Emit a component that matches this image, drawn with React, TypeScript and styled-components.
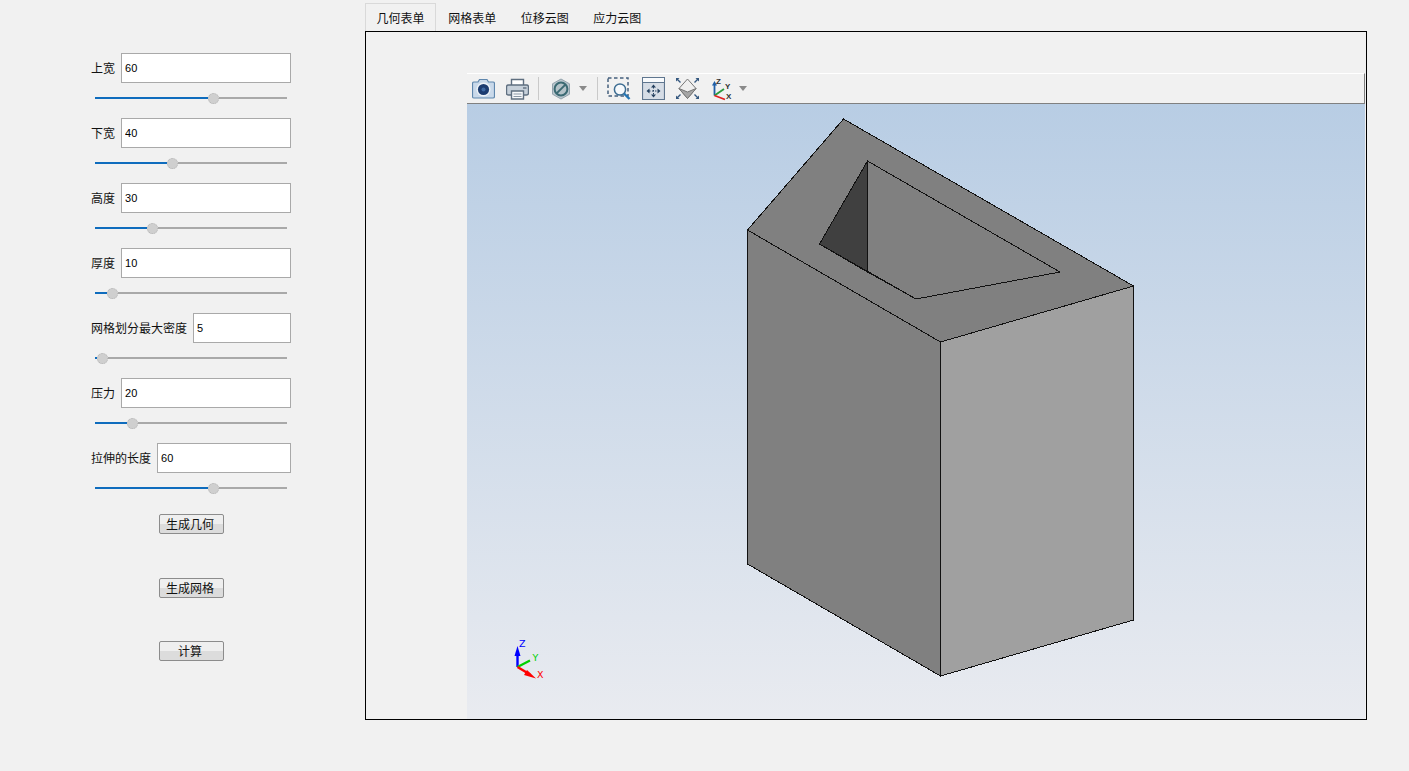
import React from 'react';
import styled, { createGlobalStyle } from 'styled-components';

const GlobalStyle = createGlobalStyle`
  html, body {
    margin: 0;
    padding: 0;
    background: #f1f1f1;
    overflow: hidden;
  }
  body {
    font-family: "Noto Sans CJK SC", "Liberation Sans", sans-serif;
    font-size: 12px;
    color: #111;
  }
`;

const Page = styled.div`
  display: flex;
  width: 1409px;
  height: 771px;
`;

const Sidebar = styled.div`
  width: 365px;
  box-sizing: border-box;
  padding: 53px 0 0 91px;
  flex: none;
`;

const Form = styled.div`
  width: 200px;
  display: flex;
  flex-direction: column;
`;

const FieldGroup = styled.div`
  height: 60px;
  margin-bottom: 5px;
`;

const FieldRow = styled.div`
  display: flex;
  align-items: center;
  gap: 6px;
  height: 30px;
`;

const FieldLabel = styled.label`
  flex: none;
  font-size: 12px;
  line-height: 30px;
  white-space: nowrap;
`;

const FieldInput = styled.input`
  flex: 1;
  min-width: 0;
  height: 30px;
  box-sizing: border-box;
  border: 1px solid #a9a9a9;
  background: #fff;
  padding: 0 3px;
  font-family: "Liberation Sans", sans-serif;
  font-size: 11px;
  color: #000;
  outline: none;
`;

const Slider = styled.div`
  display: flex;
  align-items: center;
  height: 30px;
  width: 192px;
  margin-left: 4px;
`;

const SliderFill = styled.div`
  height: 2px;
  background: #0f6cbd;
  flex: none;
`;

const SliderRest = styled.div`
  height: 2px;
  flex: 1;
  background: #a9a9a9;
`;

const SliderHandle = styled.div`
  width: 9px;
  height: 9px;
  flex: none;
  border-radius: 50%;
  background: #cfcfcf;
  border: 1px dotted #b4b4b4;
`;

const ButtonColumn = styled.div`
  display: flex;
  flex-direction: column;
  align-items: center;
  gap: 44px;
  margin-top: 6px;
`;

const ActionButton = styled.button`
  width: 65px;
  height: 20px;
  box-sizing: border-box;
  padding: 0 2px 2px 0;
  border: 1px solid #8c8c8c;
  border-radius: 2px;
  background: linear-gradient(#efefef 0 50%, #dcdcdc 50% 100%);
  font-family: inherit;
  font-size: 12px;
  line-height: 15px;
  color: #111;

  &:last-child {
    margin-top: -1px;
  }
`;

const Main = styled.div`
  width: 1002px;
  padding-top: 3px;
  flex: none;
`;

const TabBar = styled.div`
  display: flex;
  height: 28px;
`;

const Tab = styled.div<{ $active?: boolean }>`
  width: ${(props) => (props.$active ? '71px' : '72.5px')};
  box-sizing: border-box;
  text-align: center;
  line-height: 28px;
  font-size: 12px;
  border: 1px solid ${(props) => (props.$active ? '#d9d9d9' : 'transparent')};
  border-bottom: none;
`;

const Pane = styled.div`
  height: 689px;
  box-sizing: border-box;
  border: 1px solid #000;
  padding: 41px 1px 0 101px;
`;

const Viewer = styled.div`
  display: flex;
  flex-direction: column;
  height: 646px;
`;

const Toolbar = styled.div`
  height: 31px;
  flex: none;
  box-sizing: border-box;
  display: flex;
  align-items: center;
  padding-left: 5px;
  background: #f1f1f1;
  border-top: 1px solid #fff;
  border-bottom: 1px solid #808080;
  border-right: 1px solid #808080;
`;

const ToolIcon = styled.svg<{ $gap?: number }>`
  display: block;
  flex: none;
  margin-left: ${(props) => props.$gap ?? 0}px;
`;

const ToolSeparator = styled.div<{ $left: number; $right: number }>`
  width: 1px;
  height: 23px;
  background: #c9c9c9;
  flex: none;
  margin-left: ${(props) => props.$left}px;
  margin-right: ${(props) => props.$right}px;
`;

const Canvas = styled.div`
  flex: 1;
  min-height: 0;
  background: linear-gradient(#b8cde4, #e9ebf0);
`;

const ModelDrawing = styled.svg`
  display: block;
  width: 100%;
  height: 100%;
`;

const fields = [
  { label: '上宽', value: 60 },
  { label: '下宽', value: 40 },
  { label: '高度', value: 30 },
  { label: '厚度', value: 10 },
  { label: '网格划分最大密度', value: 5 },
  { label: '压力', value: 20 },
  { label: '拉伸的长度', value: 60 },
];

const tabs = ['几何表单', '网格表单', '位移云图', '应力云图'];
const actions = ['生成几何', '生成网格', '计算'];

const DropArrow = ({ gap }: { gap: number }) => (
  <ToolIcon $gap={gap} width="8" height="5" viewBox="0 0 8 5">
    <path d="M0 0H8L4 5Z" fill="#8a8a8a" />
  </ToolIcon>
);

const App = () => {
  return (
    <Page>
      <GlobalStyle />
      <Sidebar>
        <Form>
          {fields.map((field) => (
            <FieldGroup key={field.label}>
              <FieldRow>
                <FieldLabel>{field.label}</FieldLabel>
                <FieldInput defaultValue={field.value} />
              </FieldRow>
              <Slider>
                <SliderFill style={{ width: Math.round(2.02 * field.value - 8.6) + 'px' }} />
                <SliderHandle />
                <SliderRest />
              </Slider>
            </FieldGroup>
          ))}
          <ButtonColumn>
            {actions.map((action) => (
              <ActionButton key={action}>{action}</ActionButton>
            ))}
          </ButtonColumn>
        </Form>
      </Sidebar>
      <Main>
        <TabBar>
          {tabs.map((tab, i) => (
            <Tab key={tab} $active={i === 0}>
              {tab}
            </Tab>
          ))}
        </TabBar>
        <Pane>
          <Viewer>
            <Toolbar>
              {/* camera */}
              <ToolIcon width="23" height="21" viewBox="0 0 23 21">
                <path d="M2 4H6L7.5 1.5H15L16.5 4H21Q22.5 4 22.5 5.5V18.5Q22.5 20 21 20H2Q.5 20 .5 18.5V5.5Q.5 4 2 4Z" fill="#c9d9ea" stroke="#5f87ad" strokeWidth="1.2" />
                <circle cx="11.5" cy="11.5" r="7" fill="#eef3f8" />
                <circle cx="11.5" cy="11.5" r="5.6" fill="#1c3c70" />
                <circle cx="11.5" cy="11.5" r="2" fill="#3f6aa3" />
              </ToolIcon>
              {/* printer */}
              <ToolIcon $gap={11} width="23" height="22" viewBox="0 0 23 22">
                <path d="M5.5 7V1.5H17.5V7" fill="#fff" stroke="#5f6f80" strokeWidth="1.4" />
                <path d="M2.5 7H20.5Q22.5 7 22.5 9V15Q22.5 17 20.5 17H2.5Q.5 17 .5 15V9Q.5 7 2.5 7Z" fill="#c6d0da" stroke="#5f6f80" strokeWidth="1.4" />
                <path d="M5.5 13H17.5V21H5.5Z" fill="#f6f8fa" stroke="#5f6f80" strokeWidth="1.4" />
                <path d="M7.5 16H15.5M7.5 18.5H15.5" stroke="#8b98a6" />
                <path d="M17 10H20.5" stroke="#4f5f70" strokeWidth="1.2" />
              </ToolIcon>
              <ToolSeparator $left={9} $right={12} />
              {/* hidden line style */}
              <ToolIcon width="20" height="22" viewBox="0 0 20 22">
                <path d="M10 1L18.5 5.8V16.2L10 21L1.5 16.2V5.8Z" fill="#b9c6cd" stroke="#93a3ad" />
                <circle cx="10" cy="11" r="6.4" fill="#b5c3c9" stroke="#3b6a73" strokeWidth="2" />
                <path d="M5.6 15.4L14.4 6.6" stroke="#3b6a73" strokeWidth="2" />
              </ToolIcon>
              <DropArrow gap={8} />
              <ToolSeparator $left={10} $right={9} />
              {/* zoom box */}
              <ToolIcon width="24" height="23" viewBox="0 0 24 23">
                <path d="M1 1H21V19H1Z" fill="none" stroke="#46607e" strokeWidth="1.5" strokeDasharray="3.5 2.5" />
                <circle cx="13" cy="12.5" r="5.6" fill="#f6f9fc" stroke="#3d6d92" strokeWidth="1.5" />
                <path d="M17 16.5L22.5 22" stroke="#2476b5" strokeWidth="2.4" />
              </ToolIcon>
              {/* zoom fit */}
              <ToolIcon $gap={11} width="23" height="23" viewBox="0 0 23 23">
                <path d="M.5 .5H22.5V22.5H.5Z" fill="#d6dde6" stroke="#5f768f" strokeWidth="1.2" />
                <path d="M1 1H22V5H1Z" fill="#f8fafc" />
                <path d="M.5 5.5H22.5" stroke="#5f768f" />
                <path d="M11.5 7.5L14 10.5H9ZM11.5 20.5L14 17.5H9ZM4.5 14L7.5 11.5V16.5ZM18.5 14L15.5 11.5V16.5Z" fill="#24405f" />
                <path d="M11.5 10V18M7 14H16" stroke="#24405f" strokeDasharray="1.5 1.5" />
              </ToolIcon>
              {/* standard views */}
              <ToolIcon $gap={10} width="25" height="23" viewBox="0 0 25 23">
                <path d="M12.5 2L21 11.5L12.5 21.5L4 11.5Z" fill="#efefef" stroke="#777" />
                <path d="M4 11.5L12.5 15L21 11.5L12.5 21.5Z" fill="#a6a6a6" stroke="#777" />
                <path d="M1.5 1.5L5.5 5.5M23.5 1.5L19.5 5.5M1.5 21.5L5.5 17.5M23.5 21.5L19.5 17.5" stroke="#35587f" strokeWidth="1.4" />
                <path d="M1 1H4.5L1 4.5ZM24 1H20.5L24 4.5ZM1 22H4.5L1 18.5ZM24 22H20.5L24 18.5Z" fill="#35587f" />
              </ToolIcon>
              {/* orientation triad */}
              <ToolIcon $gap={12} width="20" height="24" viewBox="0 0 20 24">
                <path d="M2.5 18.5V7" stroke="#1f5fa8" strokeWidth="1.8" />
                <path d="M2.5 4L5 8.5H0Z" fill="#1f5fa8" />
                <path d="M2.5 18.5L12 12" stroke="#2a9a3c" strokeWidth="1.8" />
                <path d="M2.5 18.5L13 22.5" stroke="#e02020" strokeWidth="1.8" />
                <g fontFamily="'Liberation Sans', sans-serif" fontSize="8" fontWeight="700" fill="#333">
                  <text x="4" y="7">Z</text>
                  <text x="13" y="12">Y</text>
                  <text x="14" y="22">X</text>
                </g>
              </ToolIcon>
              <DropArrow gap={7} />
            </Toolbar>
            <Canvas>
              <ModelDrawing viewBox="467 104 898 615">
                <g stroke="#111" strokeWidth="1" strokeLinejoin="miter" shapeRendering="crispEdges">
                  <polygon points="843.5,119 1133.5,286 940.5,342 747.5,230" fill="#808080" />
                  <polygon points="747.5,230 940.5,342 940.5,676 747.5,564" fill="#808080" />
                  <polygon points="940.5,342 1133.5,286 1133.5,620 940.5,676" fill="#a0a0a0" />
                  <polygon points="867.5,161 1060,272 916,299 867.5,272" fill="#808080" />
                  <polygon points="867.5,161 867.5,272 819.5,244" fill="#404040" />
                  <polygon points="819.5,244 867.5,272 916,299" fill="#808080" />
                </g>
                {/* corner triad */}
                <g fill="none">
                  <path d="M517.5 667V652" stroke="#0000ff" strokeWidth="2.4" />
                  <path d="M517.5 646L520.5 656H514.5Z" fill="#0000ff" />
                  <path d="M517.5 667L530 660.5" stroke="#00d000" strokeWidth="2.2" />
                  <path d="M517.5 667L530 674.5" stroke="#ff0000" strokeWidth="2.4" />
                  <path d="M527 670L536 678.5L524 675Z" fill="#ff0000" />
                </g>
                <g fontFamily="'DejaVu Sans', sans-serif" fontSize="9.5">
                  <text x="519" y="647" fill="#0000ff">Z</text>
                  <text x="532.5" y="661" fill="#00d000">Y</text>
                  <text x="537" y="678" fill="#ff0000">X</text>
                </g>
              </ModelDrawing>
            </Canvas>
          </Viewer>
        </Pane>
      </Main>
    </Page>
  );
};

export default App;
